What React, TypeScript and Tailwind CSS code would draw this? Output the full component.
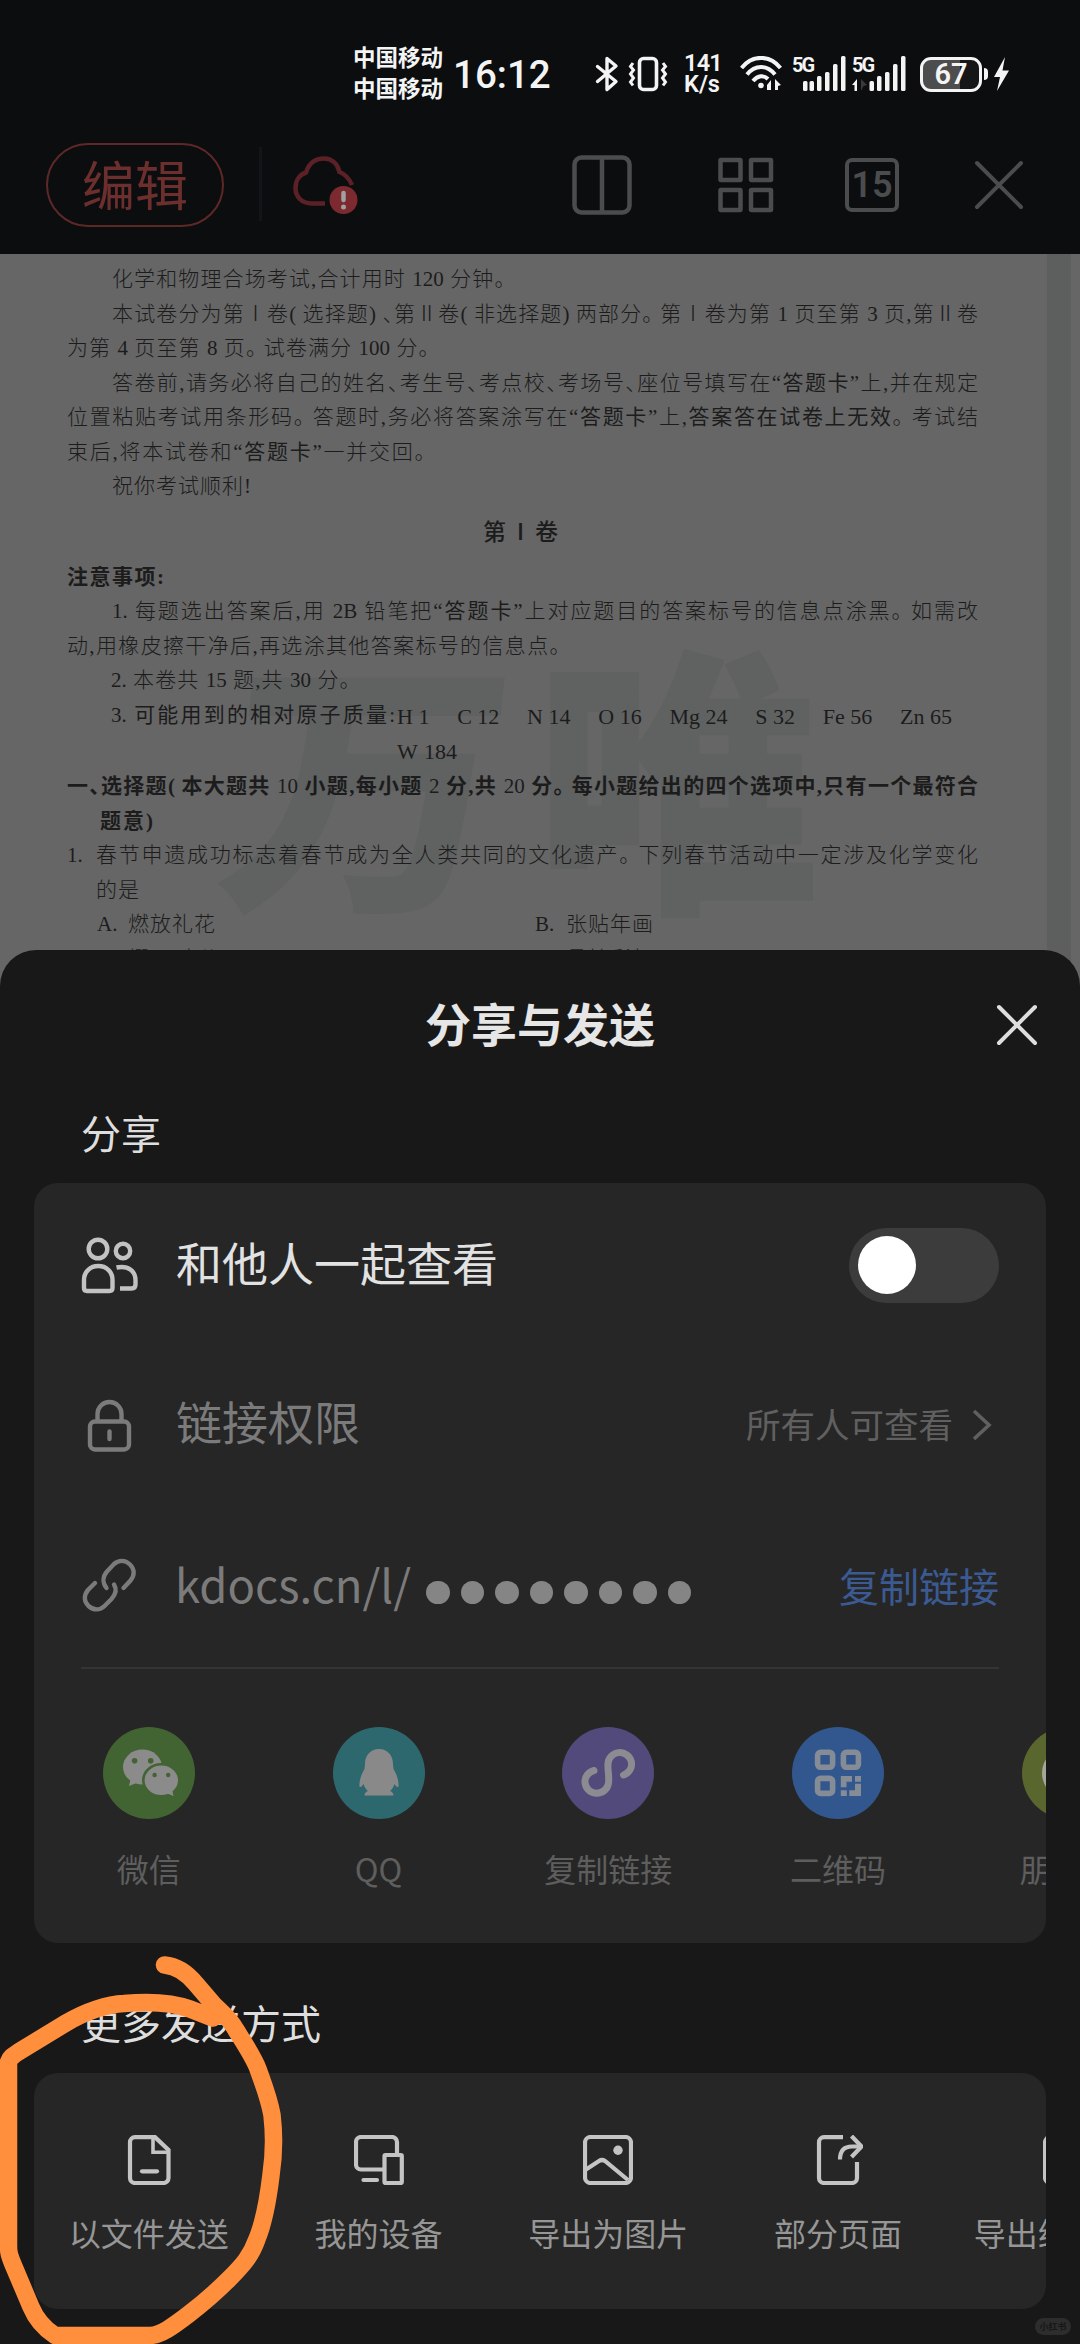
import type { ReactNode } from 'react';
import clsx from 'clsx';

interface Item {
  label: string;
  icon: ReactNode;
}

function Signal({ arrows = false }: { arrows?: boolean }) {
  return (
    <div className="relative h-[36px] w-[56px]">
      <span className="absolute left-0 top-0 font-['Roboto'] text-[20px] leading-[18px] font-bold tracking-[-2px]">5G</span>
      <svg width="56" height="36" viewBox="0 0 56 36" fill="#f4f4f4" className="absolute inset-0">
        {arrows && (
          <>
            <path d="M5 23v12H2.5v-6H0z" />
            <path d="M9 35V23l6 6-3.5 1z" fill="#3a3a3a" />
          </>
        )}
        {!arrows && <rect x="11" y="25" width="4.5" height="10" rx="1.5" />}
        <rect x="17.500" y="25" width="4.5" height="10" rx="1.5" />
        <rect x="25" y="20" width="4.5" height="15" rx="1.5" />
        <rect x="33" y="16" width="4.5" height="19" rx="1.5" />
        <rect x="41" y="8" width="4.5" height="27" rx="1.5" />
        <rect x="49" y="0" width="4.5" height="35" rx="1.5" />
      </svg>
    </div>
  );
}

function StatusBar() {
  return (
    <div className="flex h-[128px] shrink-0 items-start pt-[40px] pl-[353px] text-[#f4f4f4]">
      <div className="w-[100px] pt-[1px] text-[22.5px] leading-[31px] font-bold">
        <div>中国移动</div>
        <div>中国移动</div>
      </div>
      <div className="w-[141px] pt-[15px] font-['Roboto'] text-[38.5px] leading-[40px] font-medium">16:12</div>
      <svg width="25" height="36" viewBox="0 0 25 36" fill="none" stroke="#f4f4f4" strokeWidth="3.4" strokeLinejoin="round" strokeLinecap="round" className="mt-[16px]">
        <path d="M3.500 10.500 L22 25.500 L13 33.500 V2.500 L22 10 L3.500 25.500" />
      </svg>
      <svg width="40" height="36" viewBox="0 0 40 36" fill="none" stroke="#f4f4f4" strokeWidth="3" className="mt-[16px] ml-[9px]">
        <rect x="11.500" y="2.500" width="17" height="31" rx="4" strokeWidth="3.6" />
        <path d="M5 7 L2.500 10.500 L5.500 14 L2.500 18 L5.500 22 L2.500 26 L5 29.500" />
        <path d="M35 7 L37.500 10.500 L34.500 14 L37.500 18 L34.500 22 L37.500 26 L35 29.500" />
      </svg>
      <div className="ml-[16px] w-[56px] pt-[13px] font-['Roboto'] text-[23.5px] leading-[21px] font-semibold tracking-[-0.8px]">
        <div>141</div>
        <div className="tracking-normal">K/s</div>
      </div>
      <svg width="42" height="36" viewBox="0 0 42 36" fill="none" stroke="#f4f4f4" strokeWidth="4" className="mt-[16px]">
        <path d="M1.500 12 C12 -1.500 30 -1.500 40.500 12" />
        <path d="M7 18.500 C15 8.500 27 8.500 35 18.500" />
        <path d="M13 25 C18 19 24 19 28 23" />
        <circle cx="21" cy="29.500" r="2.800" fill="#f4f4f4" stroke="none" />
        <path d="M27 34v-5l4-5v10zM35 23l6 6-3 1v4h-3z" fill="#f4f4f4" stroke="none" />
      </svg>
      <div className="mt-[16px] ml-[10px] flex gap-[4px]">
        <Signal />
        <Signal arrows />
      </div>
      <div className="mt-[16px] ml-[12px] flex items-center">
        <div className="flex h-[35px] w-[62px] items-center justify-center rounded-[11px] border-[3px] border-[#f4f4f4] bg-[linear-gradient(90deg,#4d4d4d_66%,#151617_66%)] font-['Roboto'] text-[29px] leading-none font-semibold">67</div>
        <div className="ml-[2px] h-[12px] w-[4px] rounded-r-full bg-[#f4f4f4]" />
        <svg width="17" height="36" viewBox="0 0 17 36" fill="#f4f4f4" className="ml-[5px]">
          <path d="M12 1 L1 21 H7 L4 35 L16 14.500 H9.500 Z" />
        </svg>
      </div>
    </div>
  );
}

function Toolbar() {
  return (
    <div className="flex h-[126px] shrink-0 items-start pt-[15px] pl-[46px]">
      <div className="flex h-[84px] w-[178px] items-center justify-center rounded-full border-2 border-[#5f2828] pb-[4px] text-[53px] leading-none text-[#6c2f2e]">编辑</div>
      <div className="mt-[4px] ml-[35px] h-[74px] w-[3px] bg-[#131518]" />
      <svg width="68" height="60" viewBox="0 0 68 60" fill="none" className="mt-[11px] ml-[29px]">
        <path
          d="M34 49.500 H21 C10 49.500 4.500 42 4.500 34 C4.500 26 9 20.500 15 18.500 C18 9 24 4.500 33 4.500 C41 4.500 46.500 10 48.500 18 C55 20.500 58.500 25 61 31"
          stroke="#5c2127"
          strokeWidth="4.500"
        />
        <circle cx="52.500" cy="46" r="14" fill="#7c2a30" />
        <path d="M52.500 39v7" stroke="#a0a0a0" strokeWidth="4.500" strokeLinecap="round" />
        <circle cx="52.500" cy="53" r="2.500" fill="#a0a0a0" />
      </svg>
      <svg width="60" height="60" viewBox="0 0 60 60" fill="none" stroke="#4b4c4d" strokeWidth="4.500" className="mt-[12px] ml-[213px]">
        <rect x="2.500" y="2.500" width="55" height="55" rx="7" />
        <path d="M30 2.500v55" />
      </svg>
      <svg width="56" height="56" viewBox="0 0 56 56" fill="none" stroke="#4b4c4d" strokeWidth="4.500" className="mt-[14px] ml-[86px]">
        <rect x="2.500" y="3" width="20" height="20" rx="0.500" />
        <rect x="33" y="3" width="20" height="20" rx="0.500" />
        <rect x="2.500" y="33" width="20" height="20" rx="0.500" />
        <rect x="33" y="33" width="20" height="20" rx="0.500" />
      </svg>
      <div className="mt-[15px] ml-[71px] flex h-[54px] w-[54px] items-center justify-center rounded-[7px] border-[4px] border-[#4b4c4d] font-['Roboto'] text-[36px] leading-none font-semibold text-[#4b4c4d]">15</div>
      <svg width="52" height="52" viewBox="0 0 52 52" stroke="#4b4c4d" strokeWidth="4" strokeLinecap="round" className="mt-[16px] ml-[74px]">
        <path d="M4 4L48 48M48 4L4 48" />
      </svg>
    </div>
  );
}

// One printed line; the text is spread over the whole width of the box
function Line({ className, children }: { className: string; children: ReactNode }) {
  return (
    <div className={clsx("h-[34.5px] leading-[34.5px] whitespace-nowrap [font-feature-settings:'halt'] [text-align-last:justify]", className)}>
      {children}
    </div>
  );
}

function Paper() {
  return (
    <div className="relative h-[736px] shrink-0 overflow-hidden bg-[#666666] font-['Liberation_Serif','Noto_Sans_CJK_SC',serif] text-[21px] font-light text-[#1c1c1c]">
      <div className="absolute top-0 right-[9px] h-full w-[24px] bg-[#5d5f5f]" />
      <div className="absolute top-[360px] left-[226px] flex gap-[26px] font-['Noto_Sans_CJK_SC',sans-serif] text-[284px] leading-[320px] font-black text-[#606262]">
        <span className="origin-center scale-y-95 -skew-x-6">万</span>
        <span className="-mt-[6px]">唯</span>
      </div>
      <div className="relative pt-[8px]">
        <Line className="ml-[112px] w-[393px]">化学和物理合场考试,合计用时 120 分钟。</Line>
        <Line className="ml-[112px] w-[866px]">本试卷分为第Ⅰ卷( 选择题) 、第Ⅱ卷( 非选择题) 两部分。 第Ⅰ卷为第 1 页至第 3 页,第Ⅱ卷</Line>
        <Line className="ml-[67px] w-[362px]">为第 4 页至第 8 页。 试卷满分 100 分。</Line>
        <Line className="ml-[112px] w-[866px]">答卷前,请务必将自己的姓名、考生号、考点校、考场号、座位号填写在<b>“答题卡”</b>上,并在规定</Line>
        <Line className="ml-[67px] w-[911px]">位置粘贴考试用条形码。 答题时,务必将答案涂写在<b>“答题卡”</b>上,<b>答案答在试卷上无效</b>。 考试结</Line>
        <Line className="ml-[67px] w-[358px]">束后,将本试卷和<b>“答题卡”</b>一并交回。</Line>
        <Line className="ml-[112px] w-[139px]">祝你考试顺利!</Line>
        <div className="ml-[483px] h-[56px] w-[75px] text-[23px] leading-[57px] font-medium whitespace-nowrap [text-align-last:justify]">第Ⅰ卷</div>
        <Line className="ml-[67px] w-[97px] font-bold">注意事项:</Line>
        <Line className="ml-[112px] w-[866px]">1. 每题选出答案后,用 <b>2B</b> 铅笔把<b>“答题卡”</b>上对应题目的答案标号的信息点涂黑。 如需改</Line>
        <Line className="ml-[67px] w-[493px]">动,用橡皮擦干净后,再选涂其他答案标号的信息点。</Line>
        <Line className="ml-[111px] w-[239px]">2. 本卷共 15 题,共 30 分。</Line>
        <div className="flex">
          <Line className="ml-[111px] w-[284px]">3. <b>可能用到的相对原子质量:</b></Line>
          <div className="ml-[2px] flex w-[555px] justify-between text-[22px] leading-[37px] whitespace-nowrap">
            <span>H 1</span>
            <span>C 12</span>
            <span>N 14</span>
            <span>O 16</span>
            <span>Mg 24</span>
            <span>S 32</span>
            <span>Fe 56</span>
            <span>Zn 65</span>
          </div>
        </div>
        <Line className="ml-[397px] w-[60px] text-[22px]">W 184</Line>
        <Line className="ml-[67px] w-[911px] font-bold">一、选择题( 本大题共 <span className="font-light">10</span> 小题,每小题 <span className="font-light">2</span> 分,共 <span className="font-light">20</span> 分。 每小题给出的四个选项中,只有一个最符合</Line>
        <Line className="ml-[100px] w-[53px] font-bold">题意)</Line>
        <div className="flex">
          <Line className="ml-[67px] w-[16px]">1.</Line>
          <Line className="ml-[13px] w-[882px]">春节申遗成功标志着春节成为全人类共同的文化遗产。 下列春节活动中一定涉及化学变化</Line>
        </div>
        <Line className="ml-[96px] w-[43px]">的是</Line>
        <div className="flex">
          <Line className="ml-[97px] w-[18px]">A.</Line>
          <Line className="ml-[13px] w-[87px]">燃放礼花</Line>
          <Line className="ml-[320px] w-[18px]">B.</Line>
          <Line className="ml-[13px] w-[87px]">张贴年画</Line>
        </div>
        <div className="flex">
          <Line className="ml-[97px] w-[18px]">C.</Line>
          <Line className="ml-[13px] w-[87px]">撰写对联</Line>
          <Line className="ml-[320px] w-[18px]">D.</Line>
          <Line className="ml-[13px] w-[87px]">悬挂彩灯</Line>
        </div>
      </div>
    </div>
  );
}

const apps: Item[] = [
  {
    label: '微信',
    icon: (
      <>
        <circle cx="46" cy="46" r="46" fill="#426332" />
        <ellipse cx="39.500" cy="40" rx="19.500" ry="17.500" fill="#8b8b8b" />
        <path d="M28 50 L26 59 L36 55 Z" fill="#8b8b8b" />
        <ellipse cx="58.300" cy="53.300" rx="18" ry="16" fill="#8b8b8b" stroke="#426332" strokeWidth="2.600" />
        <path d="M63 66 L70.500 69 L69 62 Z" fill="#8b8b8b" />
        <circle cx="31.600" cy="33.700" r="2.800" fill="#426332" />
        <circle cx="47.700" cy="33.700" r="2.800" fill="#426332" />
        <circle cx="51.600" cy="48" r="2.200" fill="#426332" />
        <circle cx="65.200" cy="48" r="2.200" fill="#426332" />
      </>
    ),
  },
  {
    label: 'QQ',
    icon: (
      <>
        <circle cx="46" cy="46" r="46" fill="#2e686f" />
        <path
          d="M46 22 C37 22 32 29 32 37 L31.500 42 C28 48 26 54 26.500 59.500 C27.500 61 29.500 59 30.500 57 C31.500 60 33 62.500 35 64 C32.500 65 31.500 66.500 31.500 68.500 H60.500 C60.500 66.500 59.500 65 57 64 C59 62.500 60.500 60 61.500 57 C62.500 59 64.500 61 65.500 59.500 C66 54 64 48 60.500 42 L60 37 C60 29 55 22 46 22 Z"
          fill="#898989"
        />
      </>
    ),
  },
  {
    label: '复制链接',
    icon: (
      <>
        <circle cx="46" cy="46" r="46" fill="#514a7b" />
        <path d="M32 43.500 A11.800 11.500 0 1 0 46.500 56 C47.500 49 45.500 44 46 37 A11.800 11.500 0 1 1 61.500 48" fill="none" stroke="#8c8b91" strokeWidth="7" strokeLinecap="round" />
      </>
    ),
  },
  {
    label: '二维码',
    icon: (
      <>
        <circle cx="46" cy="46" r="46" fill="#32578f" />
        <g fill="none" stroke="#858c96" strokeWidth="5.600">
          <rect x="25.600" y="25.300" width="15" height="15" rx="3" />
          <rect x="51.400" y="25.300" width="15" height="15" rx="3" />
          <rect x="25.600" y="51.400" width="15" height="15" rx="3" />
        </g>
        <path d="M48.800 49H60V54.700H54.500V60.300H48.800ZM63 49H69V54.700H63ZM48.800 63.300H54.800V69H48.800ZM69 56.700V69H57.300V63.300H63V56.700Z" fill="#858c96" />
      </>
    ),
  },
  {
    label: '朋友圈',
    icon: (
      <>
        <circle cx="46" cy="46" r="46" fill="#59662d" />
        <circle cx="46" cy="46" r="26" fill="#a3a69b" />
      </>
    ),
  },
];

const sendWays: Item[] = [
  {
    label: '以文件发送',
    icon: (
      <>
        <path d="M31 2.200 H11 a5 5 0 0 0 -5 5 V43 a5 5 0 0 0 5 5 H39.500 a5 5 0 0 0 5 -5 V15 Z" />
        <path d="M29 3 V17.300 H44" strokeWidth="3.600" />
        <path d="M18 36.300H33" strokeLinecap="round" />
      </>
    ),
  },
  {
    label: '我的设备',
    icon: (
      <>
        <path d="M43 19 V7 a5 5 0 0 0 -5 -5 H7 a5 5 0 0 0 -5 5 V29.500 a5 5 0 0 0 5 5 H30" />
        <rect x="30.500" y="20" width="17.300" height="28" rx="1" />
        <path d="M9.500 45H23" strokeLinecap="round" />
      </>
    ),
  },
  {
    label: '导出为图片',
    icon: (
      <>
        <rect x="2" y="2" width="46" height="46" rx="5.500" />
        <path d="M3 34.500 L16 26 Q19 24 22 26 L45 45" />
        <circle cx="35" cy="15.300" r="4.700" fill="#c4c4c4" stroke="none" />
      </>
    ),
  },
  {
    label: '部分页面',
    icon: (
      <>
        <path d="M30 2.200 H11 a5 5 0 0 0 -5 5 V43 a5 5 0 0 0 5 5 H39 a5 5 0 0 0 5 -5 V27" />
        <path d="M27 24.500 C27 16 31 11.500 39 11.500 H48" />
        <path d="M38.500 1 L48.500 11.500 L38.500 22" />
      </>
    ),
  },
  { label: '导出纯图PDF', icon: <rect x="2" y="2" width="46" height="46" rx="5.500" /> },
];

function ShareCard() {
  return (
    <div className="mx-[34px] h-[760px] overflow-hidden rounded-[24px] bg-[#262626]">
      <div className="px-[47px]">
        <div className="flex h-[164px] items-center">
          <svg width="57" height="57" viewBox="0 0 57 57" fill="none" stroke="#c2c2c2" strokeWidth="4.400">
            <circle cx="17" cy="12" r="9.300" />
            <circle cx="42" cy="14" r="7.200" />
            <path d="M3 43 C3 34.500 9.500 29 17.300 29 S31.500 34.500 31.500 43 V51 Q31.500 54 28.500 54 H6 Q3 54 3 51 Z" />
            <path d="M35.500 30.500 C48 28 54.500 35 54.500 43 V47.500 Q54.500 51.500 50.500 51.500 H39" />
          </svg>
          <span className="ml-[38px] -mt-[8px] text-[46px] leading-none text-[#e2e2e2]">和他人一起查看</span>
          <div className="ml-auto h-[75px] w-[150px] rounded-full bg-[#3c3c3c] p-[8.500px]">
            <div className="h-[58px] w-[58px] rounded-full bg-white" />
          </div>
        </div>
        <div className="flex h-[156px] items-center text-[#7b7b7b]">
          <svg width="57" height="56" viewBox="0 0 57 56" fill="none" stroke="currentColor" strokeWidth="4.400" className="mt-[2px]">
            <rect x="9" y="23.500" width="39" height="28" rx="5" />
            <path d="M16.500 23 V16 a12 12 0 0 1 24 0 V23" />
            <path d="M28.500 33.500V41" strokeLinecap="round" />
          </svg>
          <span className="ml-[38px] -mt-[10px] text-[46px] leading-none">链接权限</span>
          <span className="ml-auto -mt-[3px] text-[34.500px] leading-none text-[#606060]">所有人可查看</span>
          <svg width="22" height="34" viewBox="0 0 22 34" fill="none" stroke="#606060" strokeWidth="3.600" className="mr-[6px] ml-[18px]">
            <path d="M3 3L18 17L3 31" />
          </svg>
        </div>
        <div className="flex h-[166px] items-center border-b-2 border-[#343434] text-[#7b7b7b]">
          <svg width="57" height="56" viewBox="0 0 57 56" fill="none" stroke="currentColor" strokeWidth="4.400" strokeLinecap="round">
            <path d="M42.500 31 L49.500 23.500 C54 18 53.500 12 49 7.500 C44 2.500 37.500 3 33 7 L26 14.500 C21.500 19.500 21.500 26 25.500 31" />
            <path d="M14 26 L7 33 C2.500 38.500 3 44.500 7.500 49 C12.500 53.500 19 53.500 23.500 49 L30.500 42 C35 37 35.500 31.500 33 27.500" />
          </svg>
          <div className="ml-[37px] flex w-[251px] items-center">
            <span className="-mt-[2px] text-[45.500px] leading-none">kdocs.cn/l/</span>
          </div>
          <div className="mt-[15px] flex gap-[11px]">
            {Array.from({ length: 8 }, (_, i) => (
              <span key={i} className="h-[23.500px] w-[23.500px] rounded-full bg-[#858585]" />
            ))}
          </div>
          <span className="ml-auto text-[40px] leading-none text-[#3b5a91]">复制链接</span>
        </div>
      </div>
      <div className="flex pt-[58px]">
        {apps.map(app => (
          <div key={app.label} className="flex w-[229.700px] shrink-0 flex-col items-center">
            <svg width="92" height="92" viewBox="0 0 92 92">{app.icon}</svg>
            <span className="mt-[33px] text-[32px] leading-none text-[#5e5e5e]">{app.label}</span>
          </div>
        ))}
      </div>
    </div>
  );
}

function ShareSheet() {
  return (
    <div className="relative -mt-[40px] h-[1394px] shrink-0 rounded-t-[36px] bg-[#181818]">
      <div className="relative flex h-[150px] items-center justify-center pb-[5px] text-[46px] font-bold text-[#e6e6e6]">
        分享与发送
        <svg width="44" height="44" viewBox="0 0 44 44" stroke="#dedede" strokeWidth="4" strokeLinecap="round" className="absolute top-[53px] right-[41px]">
          <path d="M4 4L40 40M40 4L4 40" />
        </svg>
      </div>
      <div className="flex h-[83px] items-center pb-[20px] pl-[81px] text-[40px] leading-none text-[#dedede]">分享</div>
      <ShareCard />
      <div className="flex h-[130px] items-center pt-[28px] pl-[81px] text-[40px] leading-none text-[#dedede]">更多发送方式</div>
      <div className="mx-[34px] flex h-[236px] overflow-hidden rounded-[24px] bg-[#262626] pt-[62px]">
        {sendWays.map(way => (
          <div key={way.label} className="flex w-[229.700px] shrink-0 flex-col items-center">
            <svg width="50" height="50" viewBox="0 0 50 50" fill="none" stroke="#c4c4c4" strokeWidth="4.200">{way.icon}</svg>
            <span className="mt-[31px] text-[32px] leading-none whitespace-nowrap text-[#969696]">{way.label}</span>
          </div>
        ))}
      </div>
      <div className="absolute right-[9px] bottom-[9px] flex h-[17px] w-[36px] items-center justify-center rounded-full bg-[#2d2d2d] text-[9px] leading-none font-bold text-[#171717]">小红书</div>
    </div>
  );
}

export default function App() {
  return (
    <div className="relative flex h-[2344px] w-[1080px] flex-col overflow-hidden bg-[#0b0d0f] font-['Noto_Sans_CJK_SC',sans-serif]">
      <StatusBar />
      <Toolbar />
      <Paper />
      <ShareSheet />

      {/* Hand-drawn marker ring */}
      <svg width="290" height="394" viewBox="0 1950 290 394" fill="none" stroke="#ff8f3c" strokeWidth="17.500" strokeLinecap="round" strokeLinejoin="round" className="absolute bottom-0 left-0">
        <path d="M164.500 1965 C177 1966 187 1973 196 1984 L214 2005 C223 2014 229 2017 236 2030 C246 2046 254 2058 258 2069 C263 2083 269 2098 272 2115 C274 2132 274 2155 271 2175 C268 2200 264 2222 257 2239 C251 2256 243 2265 229 2279 C215 2293 202 2304 189 2314 C172 2327 161 2335 150 2335.500 H55 C45 2329 36 2319 31 2307 L12 2262 C9 2254 8.500 2252 8.500 2245 V2062 C10 2057 14 2055 20 2051 L66 2023 C86 2011 108 2004 124 2003.500 C152 2001 174 2003 190 2009 L213 2018" />
      </svg>
    </div>
  );
}
